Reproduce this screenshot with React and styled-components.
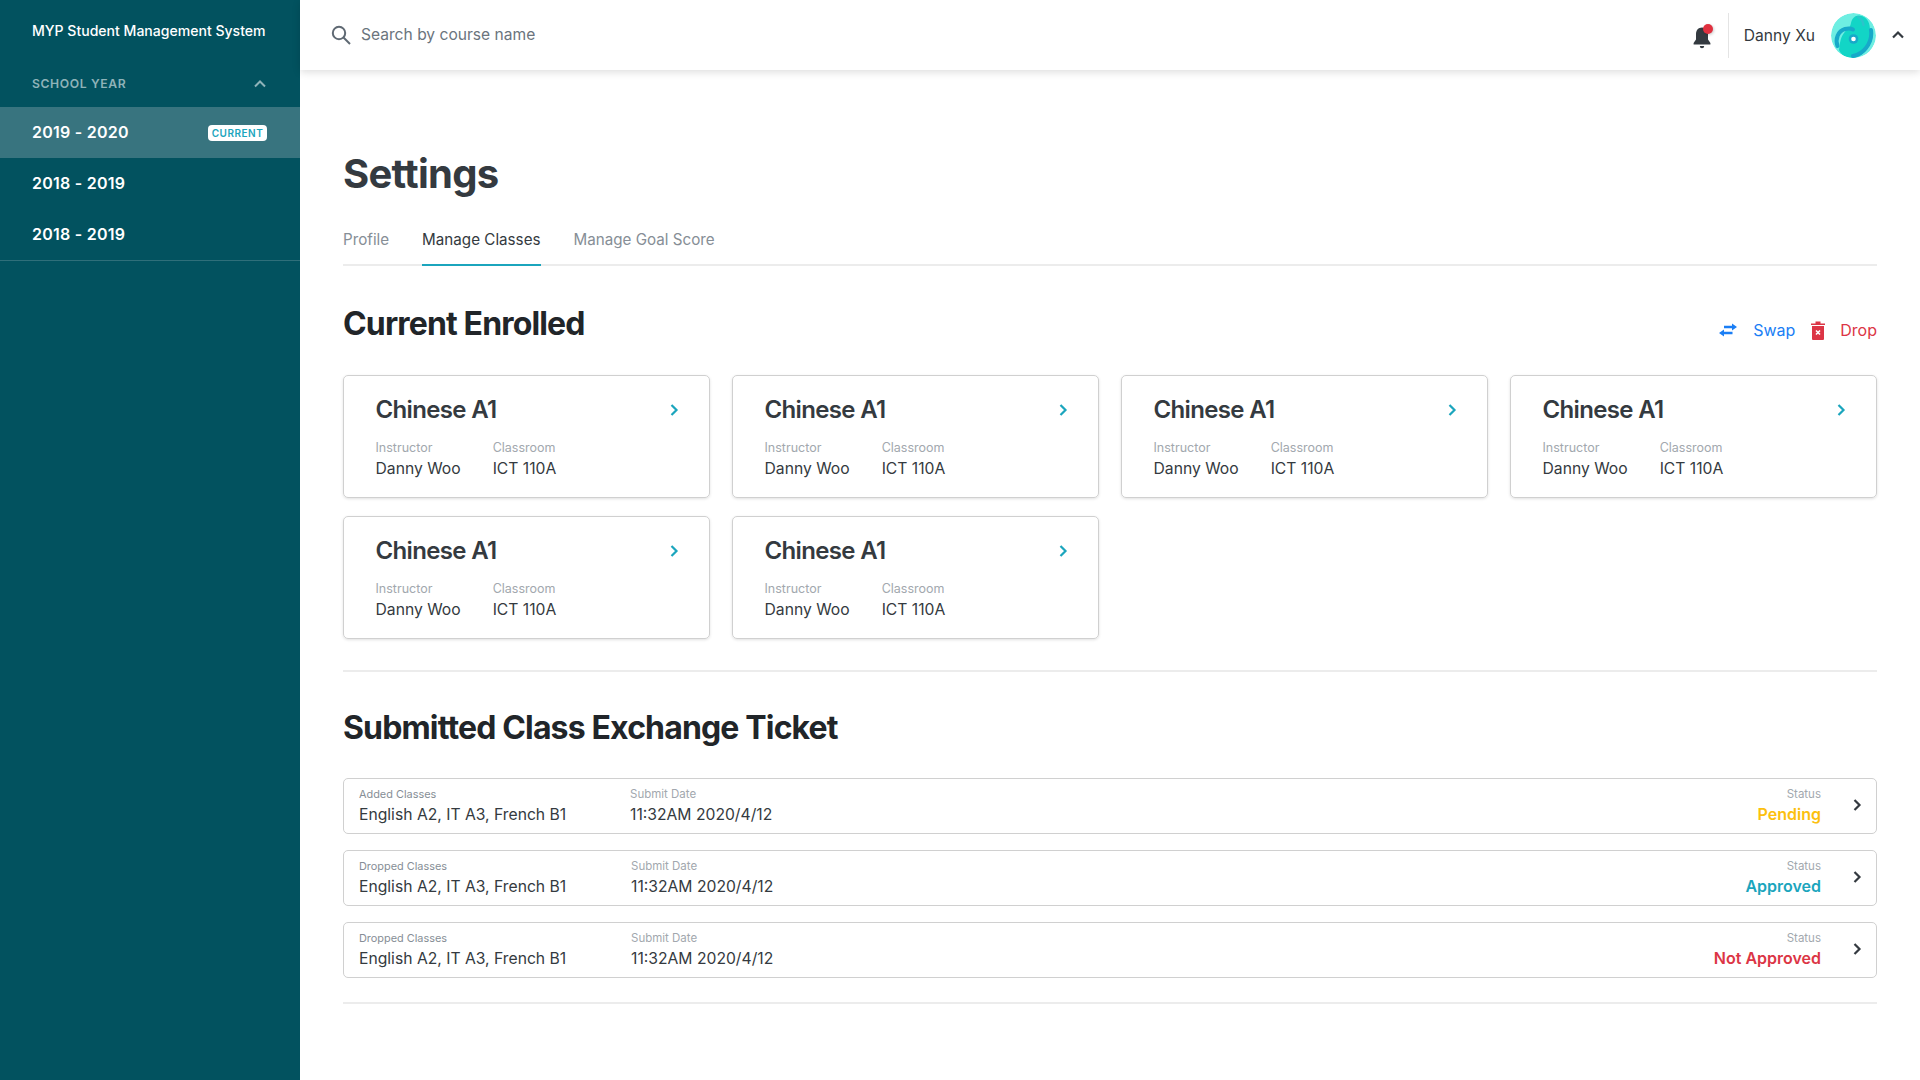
import styled, { createGlobalStyle } from "styled-components";

const GlobalStyle = createGlobalStyle`
  html, body {
    margin: 0;
    padding: 0;
    background: #fff;
    font-family: Inter, "Liberation Sans", sans-serif;
  }
  * { box-sizing: border-box; }
`;

const Page = styled.div`
  display: flex;
  width: 1920px;
  height: 1080px;
  overflow: hidden;
`;

const Sidebar = styled.aside`
  width: 300px;
  flex: none;
  background: #02525f;
  color: #fff;
`;

const Brand = styled.div`
  height: 62px;
  padding: 21px 0 0 32px;
  font-size: 14.05px;
  line-height: 20px;
  font-weight: 500;
  white-space: nowrap;
`;

const YearHeader = styled.div`
  height: 45px;
  padding: 0 32px 2px;
  display: flex;
  align-items: center;
  justify-content: space-between;
  font-size: 12.2px;
  font-weight: 600;
  letter-spacing: 0.6px;
  color: #8fb3b9;
`;

const YearList = styled.div`
  border-bottom: 1px solid #2f6f7a;
  height: 154px;
`;

const YearRow = styled.div`
  height: 51px;
  padding: 0 33px 1px 32px;
  display: flex;
  align-items: center;
  justify-content: space-between;
  font-size: 16px;
  font-weight: 600;
  letter-spacing: 0.25px;
  background: ${(p) => (p.$active ? "#38747f" : "transparent")};
`;

const Badge = styled.span`
  background: #fff;
  color: #1ba5bd;
  border-radius: 4px;
  width: 59px;
  height: 16px;
  margin-top: 2px;
  display: flex;
  align-items: center;
  justify-content: center;
  font-size: 10px;
  font-weight: 600;
  letter-spacing: 0.5px;
`;

const Main = styled.div`
  flex: 1;
  min-width: 0;
`;

const TopBar = styled.header`
  height: 70px;
  display: flex;
  align-items: center;
  padding: 0 14px 0 30px;
  background: #fff;
  box-shadow: 0 2px 8px rgba(0, 0, 0, 0.14);
`;

const Search = styled.div`
  flex: 1;
  display: flex;
  align-items: center;
  gap: 9px;
  font-size: 15.6px;
  line-height: 20px;
  color: #6b747d;
`;

const SearchText = styled.span`
  margin-top: -1px;
`;

const Bell = styled.div`
  position: relative;
  width: 24px;
  height: 26px;
  margin: 4px 14px 0 0;
`;

const Dot = styled.span`
  position: absolute;
  top: 0;
  right: 1px;
  width: 10px;
  height: 10px;
  border-radius: 50%;
  background: #e0303f;
  box-shadow: 1px 1px 3px rgba(0, 0, 0, 0.2);
`;

const UserBox = styled.div`
  display: flex;
  align-items: center;
  height: 45px;
  padding-left: 15px;
  border-left: 1px solid #e4e4e4;
  font-size: 15.6px;
  color: #343a40;
`;

const Avatar = styled.svg`
  width: 45px;
  height: 45px;
  margin: 0 14px 0 16px;
  border-radius: 50%;
`;

const Content = styled.main`
  padding: 78px 43px 0 43px;
`;

const Title = styled.h1`
  margin: 0;
  font-size: 40px;
  line-height: 52px;
  font-weight: 700;
  letter-spacing: -0.75px;
  color: #343a40;
`;

const Tabs = styled.nav`
  display: flex;
  gap: 33px;
  margin-top: 23px;
  border-bottom: 2px solid #ececec;
  height: 43px;
`;

const Tab = styled.div`
  height: 43px;
  padding-top: 7px;
  font-size: 15.2px;
  line-height: 20px;
  color: ${(p) => (p.$active ? "#343a40" : "#868e96")};
  border-bottom: 2px solid ${(p) => (p.$active ? "#1ba5bd" : "transparent")};
`;

const SectionHead = styled.div`
  display: flex;
  align-items: center;
  justify-content: space-between;
  margin-top: 38px;
  height: 40px;
`;

const SectionTitle = styled.h2`
  margin: 0;
  font-size: 32px;
  line-height: 40px;
  font-weight: 700;
  letter-spacing: -0.85px;
  color: #212529;
`;

const Actions = styled.div`
  display: flex;
  align-items: center;
  font-size: 16px;
  margin-top: 12px;
`;

const Action = styled.span`
  color: ${(p) => p.$color};
  margin-left: ${(p) => p.$gap}px;
  display: flex;
`;

const CardGrid = styled.div`
  display: grid;
  grid-template-columns: repeat(4, 367px);
  column-gap: 22px;
  row-gap: 18px;
  margin-top: 31px;
`;

const Card = styled.div`
  height: 123px;
  border: 1px solid #d0d0d0;
  border-radius: 5px;
  box-shadow: 0 1px 3px rgba(0, 0, 0, 0.12);
  padding: 18px 27px 0 31.5px;
`;

const CardTop = styled.div`
  display: flex;
  align-items: center;
  justify-content: space-between;
  height: 32px;
`;

const CardName = styled.div`
  font-size: 24px;
  line-height: 32px;
  font-weight: 600;
  letter-spacing: -0.65px;
  color: #343a40;
`;

const CardFields = styled.div`
  display: flex;
  gap: 32px;
  margin-top: 12px;
`;

const Label = styled.div`
  font-size: 12.5px;
  line-height: 20px;
  color: #a2a8ae;
  white-space: nowrap;
`;

const Value = styled.div`
  font-size: 15.7px;
  line-height: 22px;
  color: #343a40;
  white-space: nowrap;
`;

const Rule = styled.hr`
  margin: ${(p) => p.$top}px 0 0;
  border: 0;
  height: 2px;
  background: #ececec;
`;

const TicketHeading = styled(SectionTitle)`
  margin-top: 36px;
`;

const TicketList = styled.div`
  display: flex;
  flex-direction: column;
  gap: 16px;
  margin-top: 30px;
`;

const Ticket = styled.div`
  height: 56px;
  border: 1px solid #d0d0d0;
  border-radius: 5px;
  display: flex;
  align-items: center;
  padding: 0 11px 0 15px;
`;

const TicketCol = styled.div`
  width: ${(p) => p.$width}px;
  padding-top: 1px;
`;

const StatusCol = styled.div`
  flex: 1;
  text-align: right;
  padding-bottom: 1px;
  margin-right: 28px;
`;

const SmallLabel = styled(Label)`
  font-size: 11.5px;
  line-height: 15px;
  margin-bottom: 2px;
`;

const TicketKind = styled(SmallLabel)`
  font-size: 10.9px;
  color: #868e96;
`;

const Status = styled.div`
  font-size: 16px;
  line-height: 22px;
  margin-top: -1px;
  font-weight: 600;
  color: ${(p) => p.$color};
`;

const RowArrow = styled.span`
  display: flex;
  margin-top: -2px;
`;

const Chevron = ({ color, size = 16, up, width = 2.4 }) => (
  <svg width={size} height={size} viewBox="0 0 16 16" fill="none">
    <path
      d={up ? "M3 10.5 8 5.5l5 5" : "M5.5 3l5 5-5 5"}
      stroke={color}
      strokeWidth={width}
    />
  </svg>
);

const cards = [0, 1, 2, 3, 4, 5];

const tickets = [
  { label: "Added Classes", status: "Pending", color: "#fcc00e", dateWidth: 271 },
  { label: "Dropped Classes", status: "Approved", color: "#1ba5bd", dateWidth: 272 },
  { label: "Dropped Classes", status: "Not Approved", color: "#dc3545", dateWidth: 272 },
];

export default function App() {
  return (
    <Page>
      <GlobalStyle />
      <Sidebar>
        <Brand>MYP Student Management System</Brand>
        <YearHeader>
          SCHOOL YEAR
          <Chevron up color="#8fb3b9" size={16} width={2} />
        </YearHeader>
        <YearList>
          <YearRow $active>
            2019 - 2020
            <Badge>CURRENT</Badge>
          </YearRow>
          <YearRow>2018 - 2019</YearRow>
          <YearRow>2018 - 2019</YearRow>
        </YearList>
      </Sidebar>
      <Main>
        <TopBar>
          <Search>
            <svg width="22" height="22" viewBox="0 0 22 22" fill="none">
              <circle cx="9" cy="9" r="6.2" stroke="#5f6973" strokeWidth="2" />
              <path d="M13.5 13.5 20 20" stroke="#5f6973" strokeWidth="2" />
            </svg>
            <SearchText>Search by course name</SearchText>
          </Search>
          <Bell>
            <svg width="24" height="26" viewBox="0 0 24 26">
              <path
                d="M12 3.5c-3.6 0-6 2.8-6 6.5v5.5L3.6 19v1.4h16.8V19L18 15.5V10c0-3.7-2.4-6.5-6-6.5Z"
                fill="#343a40"
              />
              <path d="M9.8 22h4.4a2.2 2.2 0 0 1-4.4 0Z" fill="#343a40" />
            </svg>
            <Dot />
          </Bell>
          <UserBox>
            Danny Xu
            <Avatar viewBox="0 0 45 45">
              <circle cx="22.5" cy="22.5" r="22.5" fill="#6eeee2" />
              <path
                d="M8 37c1-6 1-12 5-17s6-5 7-10 5-9 11-7 8 8 8 14 2 12-2 17-8 11-15 11-12-3-14-8Z"
                fill="#12d5c6"
              />
              <g fill="none" stroke="#17a9c9" strokeLinecap="round">
                <path d="M6.5 33C4 26 7 18 14 16c3-.8 6-.6 8 .5" strokeWidth="4" />
                <path d="M40 17c1 7-1 13-5 18-3 4-8 7-13 8" strokeWidth="4" />
                <path d="M27 4c3 1.5 5 4 5.5 8" strokeWidth="2.5" stroke="#2cc4cb" />
              </g>
              <circle cx="22.5" cy="26" r="4.8" fill="#17a9c9" />
              <circle cx="22.5" cy="26" r="2.3" fill="#fff" />
            </Avatar>
            <Chevron up color="#343a40" size={16} width={2.2} />
          </UserBox>
        </TopBar>
        <Content>
          <Title>Settings</Title>
          <Tabs>
            <Tab>Profile</Tab>
            <Tab $active>Manage Classes</Tab>
            <Tab>Manage Goal Score</Tab>
          </Tabs>
          <SectionHead>
            <SectionTitle>Current Enrolled</SectionTitle>
            <Actions>
              <svg width="20" height="16" viewBox="0 0 20 16" fill="#1a7ef5">
                <path d="M14 1.5 19 5l-5 3.5V6.2H6V3.8h8V1.5ZM6 7.5V9.8h8.5v2.4H6v2.3L1 11l5-3.5Z" />
              </svg>
              <Action $color="#1a7ef5" $gap={15}>Swap</Action>
              <Action $color="#dc3545" $gap={16}>
                <svg width="14" height="19" viewBox="0 0 14 19" fill="#dc3545">
                  <path d="M0 2.5h14V4H0zM4.5.5h5v2h-5zM1 5h12v13a1 1 0 0 1-1 1H2a1 1 0 0 1-1-1V5Z" />
                  <path d="m5 9.5 4 4m0-4-4 4" stroke="#fff" strokeWidth="1.6" />
                </svg>
              </Action>
              <Action $color="#dc3545" $gap={15}>Drop</Action>
            </Actions>
          </SectionHead>
          <CardGrid>
            {cards.map((id) => (
              <Card key={id}>
                <CardTop>
                  <CardName>Chinese A1</CardName>
                  <Chevron color="#1ba5bd" size={16} width={2.2} />
                </CardTop>
                <CardFields>
                  <div>
                    <Label>Instructor</Label>
                    <Value>Danny Woo</Value>
                  </div>
                  <div>
                    <Label>Classroom</Label>
                    <Value>ICT 110A</Value>
                  </div>
                </CardFields>
              </Card>
            ))}
          </CardGrid>
          <Rule $top={31} />
          <TicketHeading>Submitted Class Exchange Ticket</TicketHeading>
          <TicketList>
            {tickets.map((t, i) => (
              <Ticket key={i}>
                <TicketCol $width={t.dateWidth}>
                  <TicketKind>{t.label}</TicketKind>
                  <Value>English A2, IT A3, French B1</Value>
                </TicketCol>
                <TicketCol $width={300}>
                  <SmallLabel>Submit Date</SmallLabel>
                  <Value>11:32AM 2020/4/12</Value>
                </TicketCol>
                <StatusCol>
                  <SmallLabel>Status</SmallLabel>
                  <Status $color={t.color}>{t.status}</Status>
                </StatusCol>
                <RowArrow>
                  <Chevron color="#343a40" size={16} width={2.2} />
                </RowArrow>
              </Ticket>
            ))}
          </TicketList>
          <Rule $top={24} />
        </Content>
      </Main>
    </Page>
  );
}
